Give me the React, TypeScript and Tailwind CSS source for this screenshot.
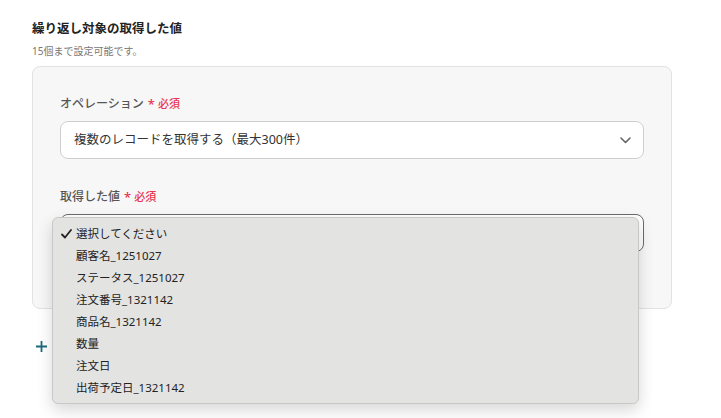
import React from "react";

const options = [
  "選択してください",
  "顧客名_1251027",
  "ステータス_1251027",
  "注文番号_1321142",
  "商品名_1321142",
  "数量",
  "注文日",
  "出荷予定日_1321142",
];

const Required = () => (
  <span className="ml-1 inline-flex items-center text-[11px] font-medium text-[#e8344e]">
    <span className="mr-[3px] text-[13px] leading-none">*</span>必須
  </span>
);

const Chevron = () => (
  <svg width="11" height="7" viewBox="0 0 11 7" fill="none">
    <path d="M1 1l4.5 4.5L10 1" stroke="#666" strokeWidth="1.6" strokeLinecap="round" strokeLinejoin="round" />
  </svg>
);

const Check = () => (
  <svg width="11" height="10" viewBox="0 0 11 10" fill="none">
    <path d="M1 5.5l3 3L10 1" stroke="#222" strokeWidth="1.8" strokeLinecap="round" strokeLinejoin="round" />
  </svg>
);

export default function App() {
  return (
    <div
      className="h-[418px] w-[721px] overflow-hidden bg-white px-8 pt-[21px]"
      style={{ fontFamily: '"Noto Sans", "Noto Sans CJK JP", sans-serif' }}
    >
      <h1 className="text-[12.5px] font-bold leading-[16px] text-[#222]">繰り返し対象の取得した値</h1>
      <p className="mt-[7px] text-[10px] leading-[14px] text-[#777]">15個まで設定可能です。</p>

      <div className="mt-[8px] w-[640px] rounded-lg border border-[#e2e2e2] bg-[#f7f7f7] pb-[56px] pl-[27px] pr-[28px] pt-[28px]">
        <div className="flex items-center text-[12px] font-medium leading-[18px] text-[#555]">
          オペレーション
          <Required />
        </div>
        <div className="mt-[8px] flex h-[38px] w-[584px] items-center justify-between rounded-lg border border-[#cfcfcf] bg-white pl-[13px] pr-[12px]">
          <span className="text-[12.5px] text-[#333]">複数のレコードを取得する（最大300件）</span>
          <Chevron />
        </div>

        <div className="mt-[29px] flex items-center text-[12px] font-medium leading-[18px] text-[#555]">
          取得した値
          <Required />
        </div>
        <div className="relative mt-[8px] h-[38px] w-[584px] rounded-lg border border-[#6b6b6b] bg-white">
          <div className="absolute left-[-9px] top-[2px] z-10 w-[587px] rounded-md border border-[#c8c8c8] bg-[#e3e3e2] pb-[4px] pt-[5px] shadow-[0_6px_16px_rgba(0,0,0,0.16)]">
            {options.map((o, i) => (
              <div key={i} className="flex h-[22px] items-center text-[11.5px] text-[#222]">
                <span className="flex w-[20px] justify-end pr-[1px]">{i === 0 ? <Check /> : null}</span>
                <span className="ml-[3px]">{o}</span>
              </div>
            ))}
          </div>
        </div>
      </div>

      <div className="mt-[31px] flex items-center pl-[3px]">
        <svg width="13" height="13" viewBox="0 0 13 13">
          <path d="M6.5 1v11M1 6.5h11" stroke="#1d6b7a" strokeWidth="1.8" />
        </svg>
      </div>
    </div>
  );
}
